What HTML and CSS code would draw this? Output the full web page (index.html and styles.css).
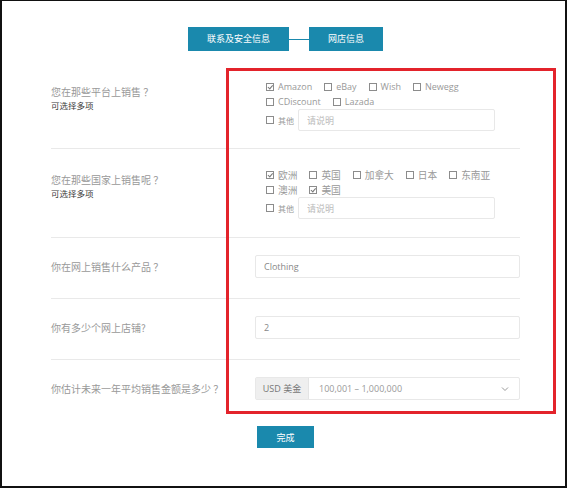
FILE: index.html
```html
<!DOCTYPE html>
<html lang="zh-CN">
<head>
<meta charset="utf-8">
<title>网店信息</title>
<link rel="stylesheet" href="styles.css">
</head>
<body>
<div class="frame">
  <nav class="steps">
    <span class="step step-first">联系及安全信息</span>
    <span class="conn"></span>
    <span class="step step-second">网店信息</span>
  </nav>

  <form class="form">
    <div class="row multi">
      <div class="label">
        <div class="q">您在那些平台上销售 ？</div>
        <div class="hint">可选择多项</div>
      </div>
      <div class="ctrl">
        <div class="checks">
          <label class="opt"><span class="cb on"></span>Amazon</label>
          <label class="opt"><span class="cb"></span>eBay</label>
          <label class="opt"><span class="cb"></span>Wish</label>
          <label class="opt"><span class="cb"></span>Newegg</label>
        </div>
        <div class="checks">
          <label class="opt"><span class="cb"></span>CDiscount</label>
          <label class="opt"><span class="cb"></span>Lazada</label>
        </div>
        <div class="other">
          <label class="opt opt-other"><span class="cb"></span>其他</label>
          <input class="other-input" type="text" placeholder="请说明">
        </div>
      </div>
    </div>

    <div class="row multi multi-2">
      <div class="label">
        <div class="q">您在那些国家上销售呢 ？</div>
        <div class="hint">可选择多项</div>
      </div>
      <div class="ctrl">
        <div class="checks">
          <label class="opt opt-cjk"><span class="cb on"></span>欧洲</label>
          <label class="opt opt-cjk"><span class="cb"></span>英国</label>
          <label class="opt opt-cjk"><span class="cb"></span>加拿大</label>
          <label class="opt opt-cjk"><span class="cb"></span>日本</label>
          <label class="opt opt-cjk"><span class="cb"></span>东南亚</label>
        </div>
        <div class="checks">
          <label class="opt opt-cjk"><span class="cb"></span>澳洲</label>
          <label class="opt opt-cjk"><span class="cb on"></span>美国</label>
        </div>
        <div class="other">
          <label class="opt opt-other"><span class="cb"></span>其他</label>
          <input class="other-input" type="text" placeholder="请说明">
        </div>
      </div>
    </div>

    <div class="row single">
      <div class="label"><div class="q q-single">你在网上销售什么产品 ？</div></div>
      <div class="ctrl">
        <input class="field" type="text" value="Clothing">
      </div>
    </div>

    <div class="row single">
      <div class="label"><div class="q q-single">你有多少个网上店铺?</div></div>
      <div class="ctrl">
        <input class="field" type="text" value="2">
      </div>
    </div>

    <div class="row single last">
      <div class="label"><div class="q q-single">你估计未来一年平均销售金额是多少 ？</div></div>
      <div class="ctrl">
        <div class="sel">
          <span class="addon">USD 美金</span>
          <span class="val">100,001 – 1,000,000</span>
          <svg class="chev" width="8" height="6" viewBox="0 0 8 6"><polyline points="1,1.5 4,4.5 7,1.5" fill="none" stroke="#999" stroke-width="1"/></svg>
        </div>
      </div>
    </div>
  </form>

  <div class="actions">
    <button class="done" type="button">完成</button>
  </div>

  <div class="annot"></div>
</div>
</body>
</html>
```

FILE: styles.css
```css
body {
  margin: 0;
  background: #fff;
  font-family: "Open Sans", "Noto Sans CJK SC", sans-serif;
}

.frame {
  position: relative;
  width: 567px;
  height: 488px;
  box-sizing: border-box;
  border: 2px solid #111;
  border-top-width: 1px;
  padding-top: 26px;
}

/* step navigation */
.steps {
  display: flex;
  justify-content: center;
  align-items: center;
  padding-left: 4px;
}

.step {
  display: block;
  height: 24px;
  line-height: 24px;
  background: #1a89ad;
  color: #fff;
  font-size: 9px;
  text-align: center;
}

.step-first { width: 101px; }
.step-second { width: 74px; }

.conn {
  display: block;
  width: 20px;
  height: 1px;
  background: #1a89ad;
}

/* form */
.form {
  margin: 10px 0 0 49px;
  width: 469px;
}

.row {
  display: flex;
  border-bottom: 1px solid #e9e9e9;
}

.row.multi {
  padding: 18px 0 17px;
  align-items: flex-start;
}

.row.multi-2 {
  padding-bottom: 18px;
}

.row.single {
  padding: 17px 0 20px;
  align-items: center;
}

.row.last {
  border-bottom: none;
  padding-bottom: 0;
}

.label {
  width: 204px;
  flex: none;
  font-family: "Noto Sans CJK SC", "Open Sans", sans-serif;
}

.multi .label {
  padding-top: 6px;
}

.q {
  font-size: 10px;
  line-height: 14px;
  color: #999;
}

.q-single {
  line-height: 23px;
}

.hint {
  font-size: 8.5px;
  line-height: 12px;
  color: #3a3a3a;
}

.ctrl {
  width: 265px;
  flex: none;
}

.checks {
  display: flex;
  align-items: center;
  height: 15px;
  padding-left: 11px;
}

.opt {
  display: flex;
  align-items: center;
  margin-right: 12px;
  font-size: 9px;
  color: #999;
  white-space: nowrap;
}

.opt-cjk {
  font-size: 9.7px;
}

.cb {
  position: relative;
  display: block;
  width: 8px;
  height: 8px;
  box-sizing: border-box;
  border: 1px solid #8c8c8c;
  background: #fff;
  margin-right: 4px;
  flex: none;
}

.cb.on::after {
  content: "";
  position: absolute;
  left: 1.8px;
  top: 0;
  width: 1.6px;
  height: 3.6px;
  border-right: 1px solid #777;
  border-bottom: 1px solid #777;
  transform: rotate(40deg);
}

.other {
  display: flex;
  align-items: center;
  height: 22px;
  padding-left: 11px;
}

.opt-other {
  width: 32px;
  margin-right: 0;
  font-size: 8px;
}

.other-input,
.field {
  display: block;
  box-sizing: border-box;
  border: 1px solid #e8e8e8;
  border-radius: 2px;
  font-family: "Open Sans", "Noto Sans CJK SC", sans-serif;
  font-size: 9px;
  color: #888;
  padding: 0 8px;
  margin: 0;
  outline: none;
  background: #fff;
}

.other-input {
  width: 197px;
  height: 22px;
}

.other-input::placeholder {
  color: #bbb;
}

.field {
  width: 265px;
  height: 23px;
}

.sel {
  display: flex;
  align-items: center;
  width: 265px;
  height: 23px;
  box-sizing: border-box;
  border: 1px solid #e8e8e8;
  border-radius: 2px;
  font-size: 9px;
}

.addon {
  display: flex;
  align-items: center;
  justify-content: center;
  width: 52px;
  height: 100%;
  background: #efefef;
  color: #777;
  border-right: 1px solid #e4e4e4;
  flex: none;
}

.val {
  flex: 1;
  padding-left: 10px;
  color: #999;
}

.chev {
  margin-right: 10px;
}

/* actions */
.actions {
  margin-top: 26px;
  padding-left: 255px;
}

.done {
  display: block;
  width: 57px;
  height: 22px;
  border: none;
  background: #1a89ad;
  color: #fff;
  font-family: "Open Sans", "Noto Sans CJK SC", sans-serif;
  font-size: 9px;
  padding: 0;
}

/* red annotation overlay */
.annot {
  position: absolute;
  left: 224px;
  top: 67px;
  width: 330px;
  height: 346px;
  box-sizing: border-box;
  border: 3px solid #e3232b;
  pointer-events: none;
}
```
